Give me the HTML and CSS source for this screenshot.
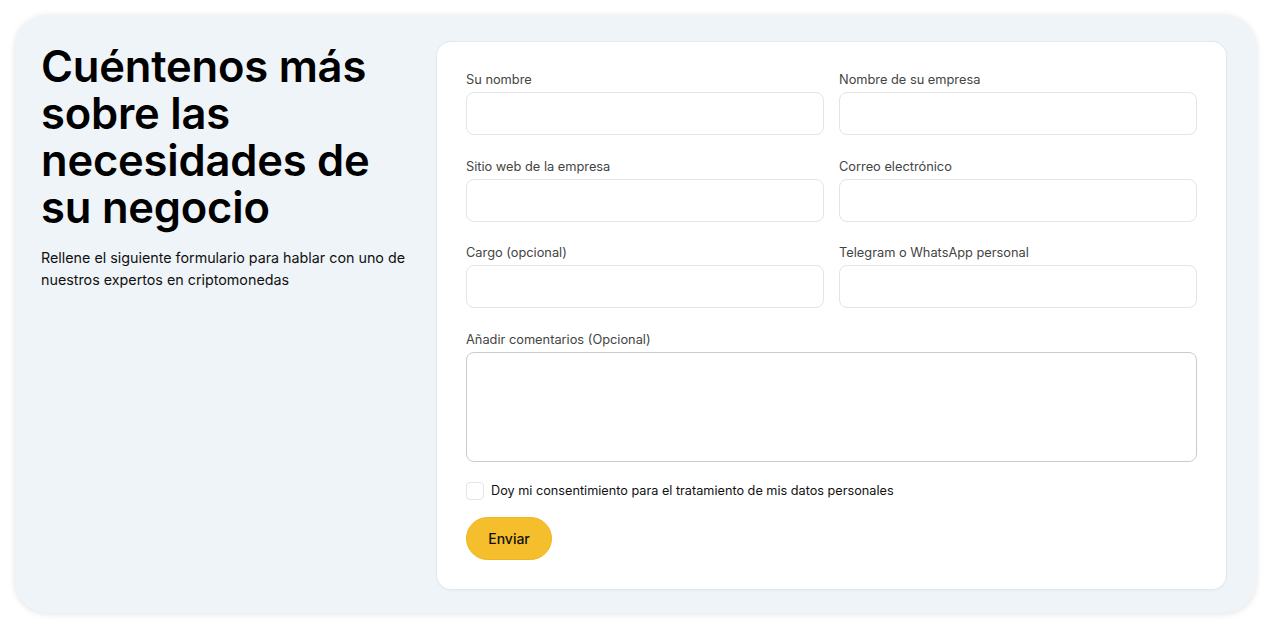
FILE: index.html
```html
<html>
<head>
    <meta charset="utf-8">
    <link rel="stylesheet" href="styles.css">
</head>
<body>

<div class="panel">
  <div class="intro">
    <h1>Cuéntenos más sobre las necesidades de su negocio</h1>
    <p>Rellene el siguiente formulario para hablar con uno de nuestros expertos en criptomonedas</p>
  </div>

  <form class="form">
    <div class="grid">
      <label class="field">Su nombre <input type="text"></label>
      <label class="field">Nombre de su empresa <input type="text"></label>
      <label class="field">Sitio web de la empresa <input type="text"></label>
      <label class="field">Correo electrónico <input type="text"></label>
      <label class="field">Cargo (opcional) <input type="text"></label>
      <label class="field">Telegram o WhatsApp personal <input type="text"></label>
      <label class="field wide">Añadir comentarios (Opcional) <textarea></textarea></label>
    </div>
    <label class="consent"><span class="box"></span>Doy mi consentimiento para el tratamiento de mis datos personales</label>
    <button type="button" class="send">Enviar</button>
  </form>
</div>

</body>
</html>
```

FILE: styles.css
```css
* {
  margin: 0px;
  padding: 0px;
  box-sizing: border-box;
}
body {
  background-color: #ffffff;
  font-family: Inter, "Noto Sans", sans-serif;
  color: #111;
  padding: 15px 15px 16px 15px;
}
.panel {
  display: grid;
  grid-template-columns: 370px 1fr;
  gap: 26px;
  height: 598px;
  padding: 27px 30px 24px 26px;
  background-color: #eff4f9;
  border-radius: 32px;
  box-shadow: 0 1px 6px rgba(0,0,0,0.12);
}
.intro h1 {
  font-size: 43.5px;
  line-height: 47px;
  font-weight: 600;
  letter-spacing: -0.2px;
  color: #000;
  margin-top: 1px;
}
.intro p {
  margin-top: 16px;
  font-size: 14.3px;
  line-height: 22px;
  color: #111;
}
.form {
  background-color: #fff;
  border-radius: 14px;
  box-shadow: 0 0 0 1px #e3e8ee, 0 1px 3px rgba(0,0,0,0.06);
  padding: 30px 29px 29px 29px;
}
.grid {
  display: grid;
  grid-template-columns: 1fr 1fr;
  column-gap: 15px;
  row-gap: 23.5px;
}
.field {
  display: flex;
  flex-direction: column;
  gap: 4px;
  font-size: 12.8px;
  line-height: 16px;
  color: #444;
}
.field.wide {
  grid-column: 1 / 3;
}
.field input {
  height: 43px;
  border: 1px solid #e2e4e8;
  border-radius: 8px;
  background: #fff;
}
.field textarea {
  height: 110px;
  border: 1px solid #c9cbce;
  border-radius: 8px;
  resize: none;
}
.consent {
  display: flex;
  align-items: center;
  gap: 7px;
  margin-top: 20px;
  font-size: 12.7px;
  color: #111;
}
.box {
  width: 18px;
  height: 18px;
  border: 1px solid #e2e4e8;
  border-radius: 4px;
}
.send {
  margin-top: 17px;
  width: 86px;
  height: 43px;
  border: 1px solid #efb61c;
  border-radius: 22px;
  background-color: #f4be2c;
  font-family: Inter, sans-serif;
  font-size: 14px;
  font-weight: 500;
  color: #111;
}
```
